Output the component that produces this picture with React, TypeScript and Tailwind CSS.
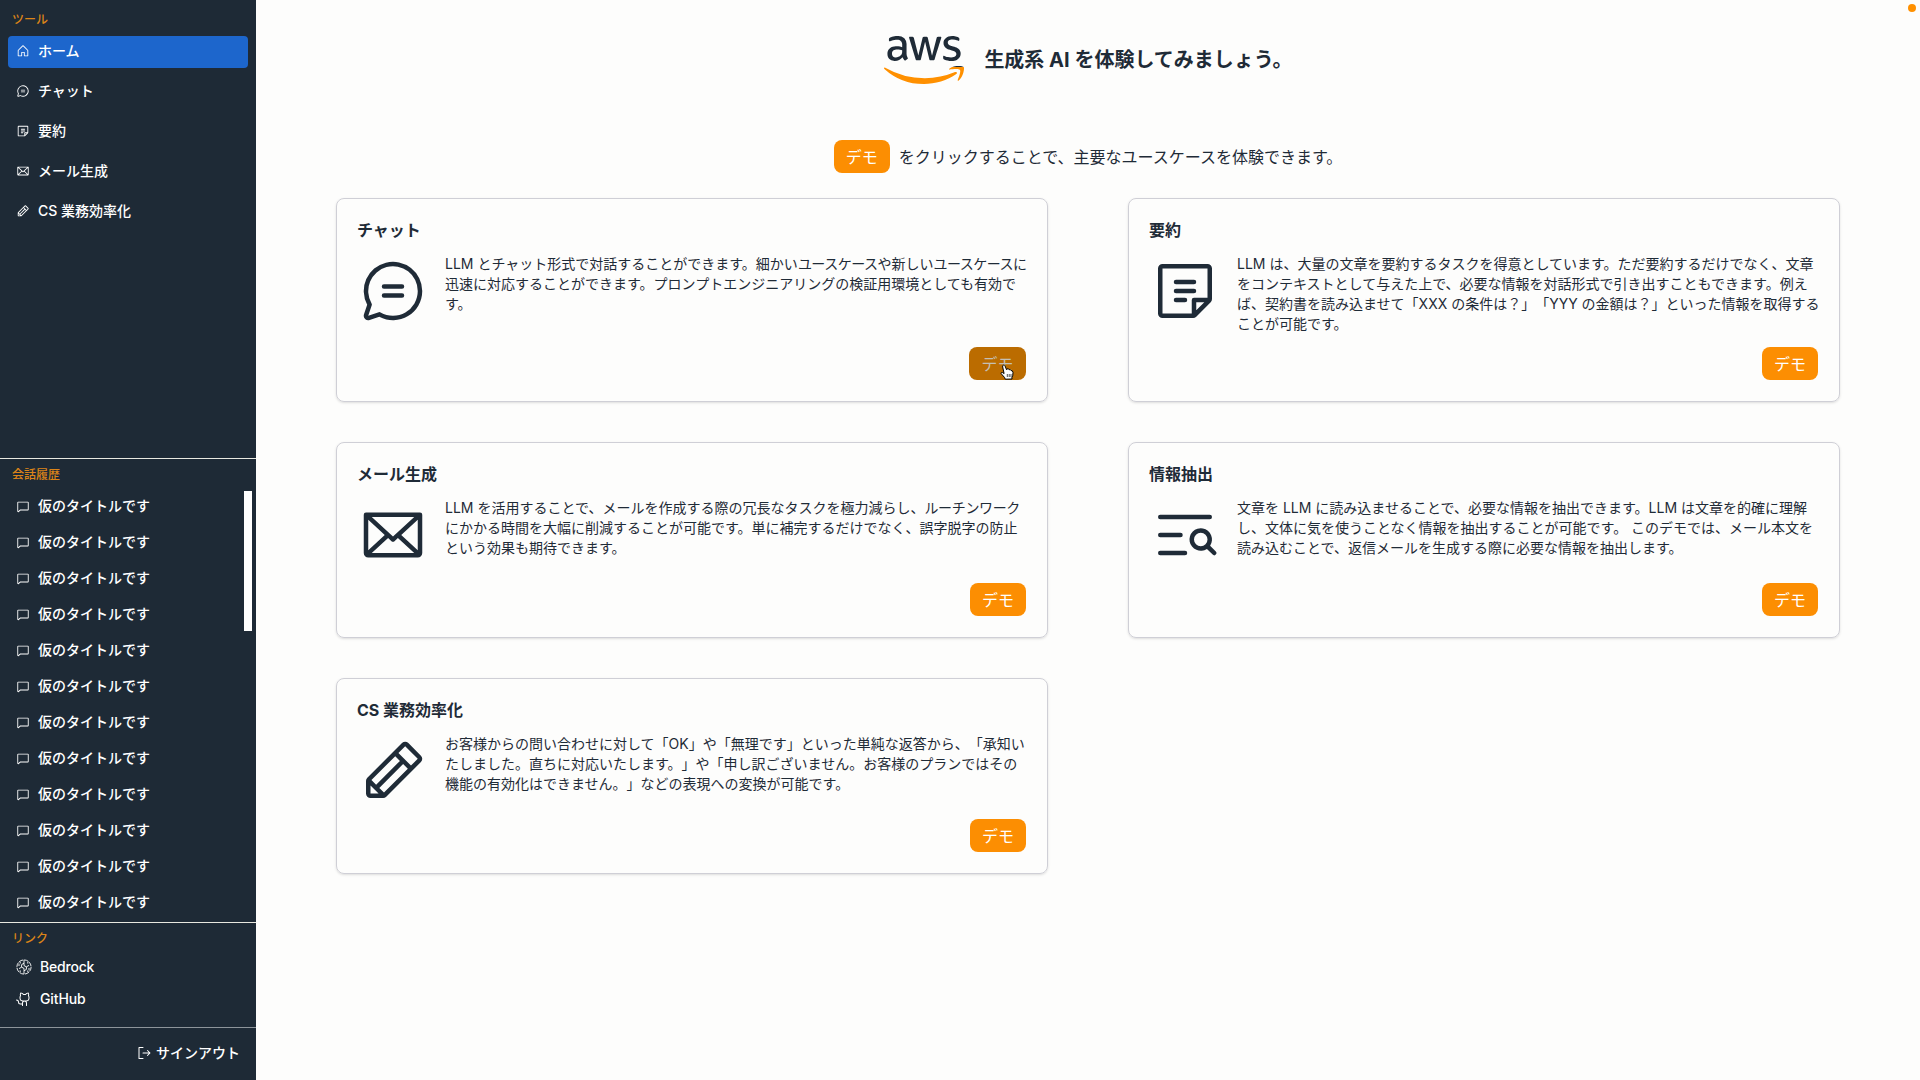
import type { ReactNode } from "react";
import type { IconType } from "react-icons";
import {
  PiHouse,
  PiChatCircleText,
  PiNote,
  PiEnvelope,
  PiPencil,
  PiChat,
  PiGithubLogo,
  PiSignOut,
  PiListMagnifyingGlass,
} from "react-icons/pi";
import { FaAws } from "react-icons/fa6";

const menu: { label: string; icon: IconType; active?: boolean }[] = [
  { label: "ホーム", icon: PiHouse, active: true },
  { label: "チャット", icon: PiChatCircleText },
  { label: "要約", icon: PiNote },
  { label: "メール生成", icon: PiEnvelope },
  { label: "CS 業務効率化", icon: PiPencil },
];

const history = Array.from({ length: 12 }, () => "仮のタイトルです");

const cards: { title: string; icon: IconType; lines: string[]; hovered?: boolean }[] = [
  {
    title: "チャット",
    icon: PiChatCircleText,
    hovered: true,
    lines: [
      "LLM とチャット形式で対話することができます。細かいユースケースや新しいユースケースに",
      "迅速に対応することができます。プロンプトエンジニアリングの検証用環境としても有効で",
      "す。",
    ],
  },
  {
    title: "要約",
    icon: PiNote,
    lines: [
      "LLM は、大量の文章を要約するタスクを得意としています。ただ要約するだけでなく、文章",
      "をコンテキストとして与えた上で、必要な情報を対話形式で引き出すこともできます。例え",
      "ば、契約書を読み込ませて「XXX の条件は？」「YYY の金額は？」といった情報を取得する",
      "ことが可能です。",
    ],
  },
  {
    title: "メール生成",
    icon: PiEnvelope,
    lines: [
      "LLM を活用することで、メールを作成する際の冗長なタスクを極力減らし、ルーチンワーク",
      "にかかる時間を大幅に削減することが可能です。単に補完するだけでなく、誤字脱字の防止",
      "という効果も期待できます。",
    ],
  },
  {
    title: "情報抽出",
    icon: PiListMagnifyingGlass,
    lines: [
      "文章を LLM に読み込ませることで、必要な情報を抽出できます。LLM は文章を的確に理解",
      "し、文体に気を使うことなく情報を抽出することが可能です。 このデモでは、メール本文を",
      "読み込むことで、返信メールを生成する際に必要な情報を抽出します。",
    ],
  },
  {
    title: "CS 業務効率化",
    icon: PiPencil,
    lines: [
      "お客様からの問い合わせに対して「OK」や「無理です」といった単純な返答から、「承知い",
      "たしました。直ちに対応いたします。」や「申し訳ございません。お客様のプランではその",
      "機能の有効化はできません。」などの表現への変換が可能です。",
    ],
  },
];

function Tight({ text }: { text: string }) {
  return (
    <>
      {text.split(/(ユースケース|ルーチンワーク)/).map((part, i) =>
        part === "ユースケース" ? (
          <span key={i} className="tracking-[-0.5px]">
            {part}
          </span>
        ) : part === "ルーチンワーク" ? (
          <span key={i} className="tracking-[-0.35px]">
            {part}
          </span>
        ) : (
          part
        ),
      )}
    </>
  );
}

function BedrockIcon() {
  return (
    <svg viewBox="0 0 16 16" className="size-4" fill="none" stroke="currentColor" strokeWidth="0.9">
      <circle cx="8" cy="8" r="7.1" strokeDasharray="4.6 0.975" />
      <path d="M8 1v3.2L5.6 5.6v2.6M8 15v-3.2l2.4-1.4V7.8M5.6 8.2 8 9.4v2.4M10.4 7.8 8 6.6V4.2M5.6 8.2 3 9.6M10.4 7.8 13 6.4M2 6h2M12 10h2M4.2 2.8v1.8M11.8 2.8v1.8M4.2 13.2v-1.8M11.8 13.2v-1.8" />
    </svg>
  );
}

function AwsLogo() {
  return (
    <>
      <svg className="absolute size-0">
        <defs>
          <linearGradient id="aws-fill" gradientUnits="userSpaceOnUse" x1="0" y1="0" x2="0" y2="512">
            <stop offset="0.61" stopColor="#1f2b37" />
            <stop offset="0.61" stopColor="#ff9000" />
          </linearGradient>
        </defs>
      </svg>
      <FaAws className="h-[64px] w-[80px]" style={{ fill: "url(#aws-fill)" }} />
    </>
  );
}

function DemoButton({ hovered = false }: { hovered?: boolean }) {
  return (
    <button
      className={
        hovered
          ? "relative h-[33px] w-[57px] rounded-lg bg-[#bb6c00] text-base leading-none text-[#c4bfb4]"
          : "relative h-[33px] w-14 rounded-lg bg-[#fc8e02] text-base leading-none text-white"
      }
    >
      デモ
      {hovered && <HandCursor />}
    </button>
  );
}

function HandCursor() {
  return (
    <svg viewBox="0 0 14 16" className="absolute left-[31px] top-[17px] h-4 w-[14px]">
      <path
        d="M3.2 1.2c.7-.5 1.5-.2 1.8.6l1.5 3.9.5-.9 1.4.2.7.6 1.3.1.6.8 1.4.4.6 1.6-.3 3.4-.8 1.4.1 1.7-6.7.2-.8-1.8-3.3-3.7c-.5-.9.5-1.7 1.4-1.1l1.5 1L2.7 3c-.3-.8 0-1.5.5-1.8Z"
        fill="#fff"
        stroke="#000"
        strokeWidth="1"
        strokeLinejoin="round"
      />
      <path d="M7.3 10v3M9.2 10v3M11 10v3" stroke="#000" strokeWidth="0.7" />
    </svg>
  );
}

function SectionLabel({ children }: { children: ReactNode }) {
  return <div className="pl-3 text-xs leading-4 text-[#dc8418]">{children}</div>;
}

function Sidebar() {
  return (
    <aside className="flex h-full w-64 shrink-0 flex-col bg-[#1e2a36] text-sm font-medium text-white">
      <div className="h-[458px] pt-3">
        <SectionLabel>ツール</SectionLabel>
        <nav className="mt-2 flex flex-col gap-2 px-2">
          {menu.map(({ label, icon: Icon, active }) => (
            <a
              key={label}
              className={
                active
                  ? "flex h-8 items-center rounded bg-[#1d66cc] pb-0.5 pl-2"
                  : "flex h-8 items-center pb-0.5 pl-2"
              }
            >
              <Icon className="mr-2 size-3.5" />
              {label}
            </a>
          ))}
        </nav>
      </div>
      <div className="flex h-[464px] flex-col border-t border-[#e8e8e0] pt-2">
        <SectionLabel>会話履歴</SectionLabel>
        <div className="mt-2 flex flex-1 justify-between overflow-hidden pr-1">
          <ul className="pl-4">
            {history.map((label, i) => (
              <li key={i} className="flex h-9 items-start pt-[5px]">
                <span className="flex items-center leading-5">
                  <PiChat className="mr-2 size-3.5" />
                  {label}
                </span>
              </li>
            ))}
          </ul>
          <div className="h-[140px] w-2 bg-white" />
        </div>
      </div>
      <div className="h-[105px] border-t border-[#e8e8e0] pt-2">
        <SectionLabel>リンク</SectionLabel>
        <div className="mt-1 flex flex-col pl-4">
          <a className="flex h-8 items-center gap-2 tracking-[-0.2px]">
            <BedrockIcon />
            Bedrock
          </a>
          <a className="flex h-8 items-center gap-2 tracking-[-0.1px]">
            <PiGithubLogo className="size-4" />
            GitHub
          </a>
        </div>
      </div>
      <div className="flex flex-1 items-center justify-end border-t border-[#8d949a] pb-0.5 pr-4">
        <PiSignOut className="mr-1 size-4" />
        サインアウト
      </div>
    </aside>
  );
}

export default function App() {
  return (
    <div
      lang="ja"
      className="relative flex h-[1080px] w-[1920px] overflow-hidden bg-[#fdfdfc] font-['Inter','Noto_Sans_CJK_JP',sans-serif] text-[#1f2b37] [text-spacing-trim:space-all]"
    >
      <Sidebar />
      <main className="flex flex-1 flex-col px-20">
        <header className="flex h-[120px] items-center justify-center gap-5 pl-px">
          <AwsLogo />
          <h1 className="text-xl font-bold">生成系 AI を体験してみましょう。</h1>
        </header>
        <div className="mt-5 flex h-[33px] items-center justify-center gap-2">
          <DemoButton />
          <p className="pl-px">をクリックすることで、主要なユースケースを体験できます。</p>
        </div>
        <div className="mt-[25px] grid grid-cols-2 gap-x-20 gap-y-10">
          {cards.map(({ title, icon: Icon, lines, hovered }) => (
            <section
              key={title}
              className="flex flex-col rounded-lg border border-[#cfcfd6] p-5 shadow-sm"
            >
              <h2 className="-mt-px mb-px text-base font-bold leading-6">{title}</h2>
              <div className="mt-3 flex gap-4">
                <Icon className="size-[72px] shrink-0" />
                <p className="-mt-px mb-px whitespace-nowrap text-sm leading-5">
                  {lines.map((line) => (
                    <span key={line} className="block">
                      <Tight text={line} />
                    </span>
                  ))}
                </p>
              </div>
              <div className="mt-auto flex justify-end pb-px pr-px pt-3">
                <DemoButton hovered={hovered} />
              </div>
            </section>
          ))}
        </div>
      </main>
      <div className="absolute right-1 top-1 size-2 rounded-full bg-[#ff9000]" />
    </div>
  );
}
